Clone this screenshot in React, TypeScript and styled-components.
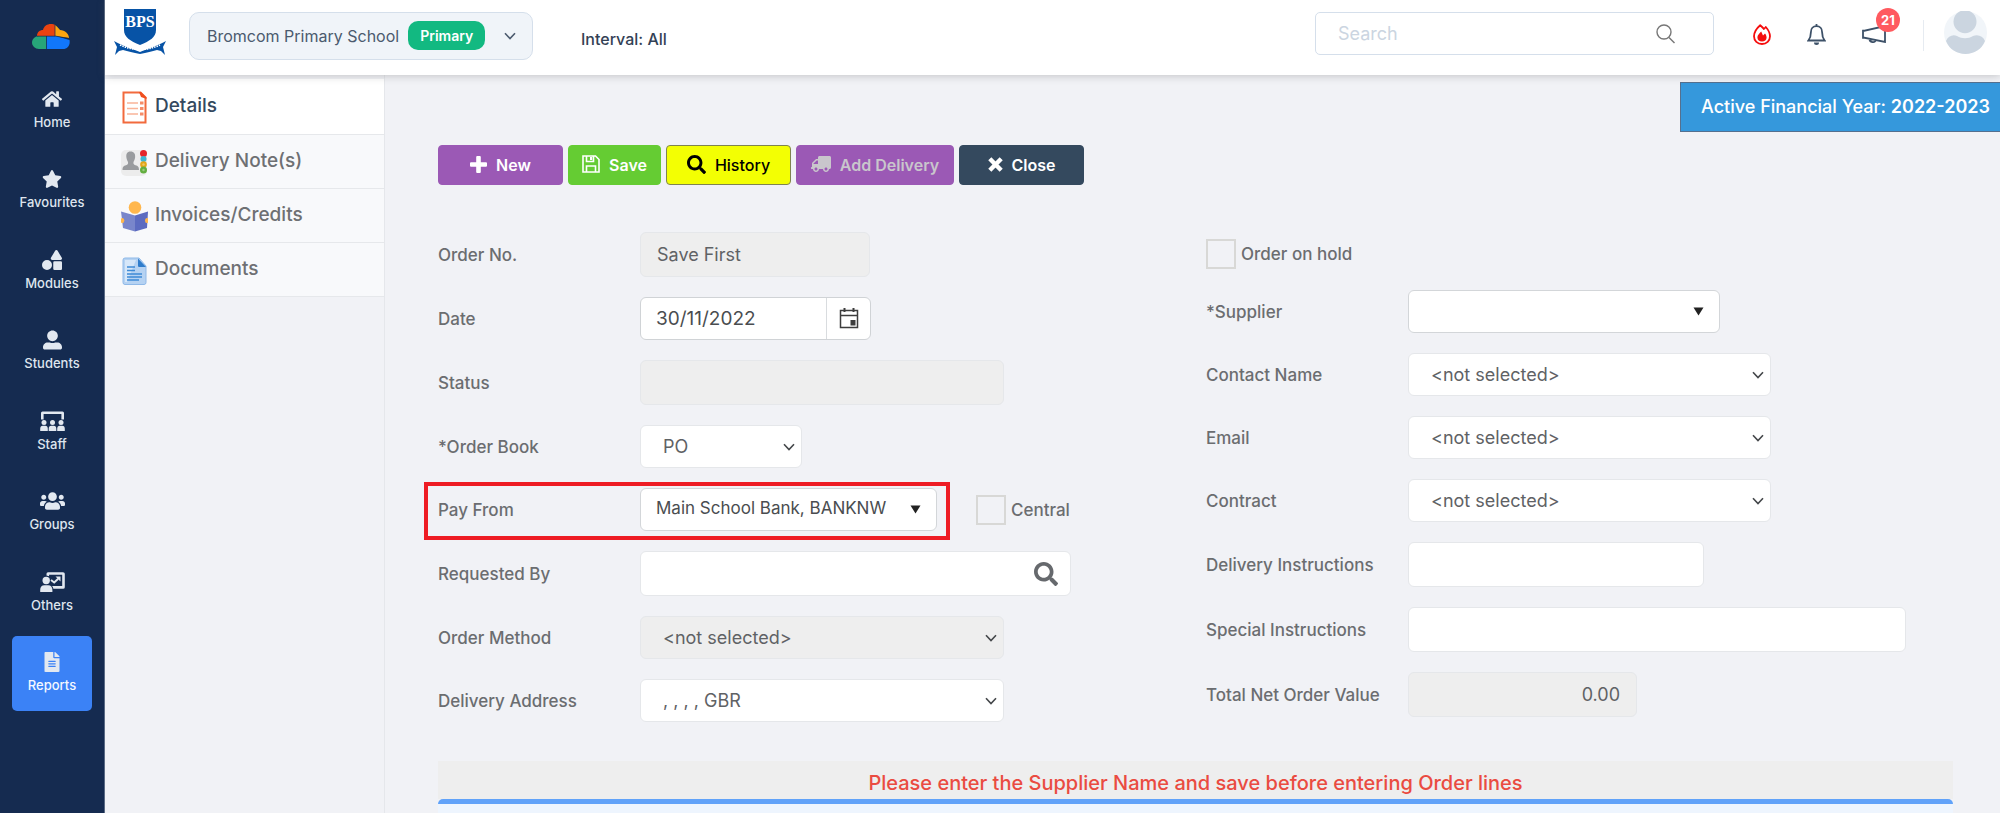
import React from 'react';
import styled, { createGlobalStyle, css } from 'styled-components';
import { FaHome, FaStar, FaShapes, FaUserAlt, FaUsers, FaFileAlt, FaSearch, FaTruck } from 'react-icons/fa';

const GlobalStyle = createGlobalStyle`
  *, *::before, *::after { box-sizing: border-box; }
  body {
    margin: 0;
    background: #f1f2f6;
    font-family: Inter, "Liberation Sans", sans-serif;
    color: #6b6d70;
  }
  button, input, select { font: inherit; color: inherit; margin: 0; }
  a { color: inherit; text-decoration: none; }
  ul { list-style: none; margin: 0; padding: 0; }
`;

/* ---------- shell ---------- */

const Shell = styled.div`
  display: flex;
  min-height: 100vh;
`;

const NavRail = styled.nav`
  flex: none;
  width: 105px;
  background: #152b50;
  border-right: 1px solid #5b6b85;
`;

const Brand = styled.a`
  display: flex;
  justify-content: center;
  padding: 24px 2px 24px 0;
  svg { display: block; }
`;

const NavItem = styled.li`
  margin: 0 12px 5px;
  &:nth-child(even) { margin-bottom: 6px; }
`;

const NavLink = styled.a<{ $active?: boolean }>`
  display: flex;
  flex-direction: column;
  align-items: center;
  gap: 4px;
  height: 75px;
  padding-top: 16px;
  border-radius: 5px;
  font-size: 13px;
  font-weight: 500;
  line-height: 18px;
  color: ${p => (p.$active ? '#f4f8ff' : '#dfe5ee')};
  background: ${p => (p.$active ? '#3b82f6' : 'transparent')};
  svg { display: block; height: 20px; color: #e2e8f0; }
`;

const Main = styled.div`
  flex: 1;
  min-width: 0;
  display: flex;
  flex-direction: column;
`;

/* ---------- header ---------- */

const Header = styled.header`
  display: flex;
  align-items: center;
  height: 75px;
  padding: 0 13px 0 8px;
  background: #fff;
  box-shadow: 0 1px 8px rgba(90, 90, 90, 0.3);
  z-index: 1;
`;

const Crest = styled.svg`
  display: block;
  flex: none;
  margin: 0 22px 11px 0;
`;

const SchoolPicker = styled.button`
  display: flex;
  align-items: center;
  width: 344px;
  height: 48px;
  margin-bottom: 4px;
  padding: 0 16px 0 17px;
  border: 1px solid #d5dfeb;
  border-radius: 10px;
  background: #f0f4f9;
  font-size: 16px;
  color: #4b5a6e;
  svg { margin-left: auto; }
`;

const Pill = styled.span`
  margin-left: 9px;
  padding: 0 12px;
  border-radius: 10px;
  background: #12b981;
  color: #fff;
  font-size: 14px;
  font-weight: 600;
  line-height: 29px;
`;

const Interval = styled.span`
  margin-left: 48px;
  padding-top: 2px;
  font-size: 16px;
  font-weight: 500;
  color: #334155;
`;

const SearchBox = styled.form`
  display: flex;
  align-items: center;
  width: 399px;
  height: 43px;
  margin: 0 39px 8px auto;
  padding: 0 38px 0 22px;
  border: 1px solid #d5dfeb;
  border-radius: 5px;
  background: #fff;
`;

const SearchInput = styled.input`
  flex: 1;
  min-width: 0;
  border: 0;
  padding: 0;
  outline: 0;
  font-size: 18px;
  background: transparent;
  &::placeholder { color: #cbd5e1; opacity: 1; }
`;

const PlainButton = styled.button`
  display: flex;
  padding: 0;
  border: 0;
  background: transparent;
  cursor: pointer;
`;

const HeaderActions = styled.div`
  display: flex;
  align-items: center;
  gap: 36px;
  margin-bottom: 6px;
  color: #3d5168;
`;

const BadgeHolder = styled.span`
  position: relative;
  display: flex;
`;

const Badge = styled.span`
  position: absolute;
  left: 14px;
  top: -18px;
  width: 24px;
  border-radius: 12px;
  background: #ff5a5f;
  color: #fff;
  font-size: 13px;
  font-weight: 700;
  line-height: 24px;
  text-align: center;
`;

const Separator = styled.span`
  width: 1px;
  height: 31px;
  margin: 0 20px 4px 37px;
  background: #e6ebf1;
`;

const ProfileButton = styled(PlainButton)`
  margin-bottom: 10px;
`;

/* ---------- body ---------- */

const Body = styled.div`
  flex: 1;
  display: flex;
`;

const SidePanel = styled.aside`
  flex: none;
  width: 280px;
  padding-top: 4px;
  border-right: 1px solid #e5e7eb;
`;

const SideLink = styled.a<{ $active?: boolean }>`
  display: flex;
  align-items: center;
  gap: 7px;
  height: ${p => (p.$active ? 56 : 54)}px;
  padding: 0 0 2px 16px;
  border-bottom: 1px solid #e6e8eb;
  background: ${p => (p.$active ? '#fff' : '#f8f9fb')};
  color: ${p => (p.$active ? '#34495e' : '#6e7073')};
  font-size: 19px;
  font-weight: 500;
  line-height: 24px;
  svg { flex: none; margin-top: 4px; }
`;

const Content = styled.main`
  flex: 1;
  min-width: 0;
  display: flex;
  flex-direction: column;
  padding: 7px 0 0 53px;
`;

const FinancialYear = styled.div`
  align-self: flex-end;
  padding: 0 10px 0 20px;
  border: 1px solid #55708f;
  border-right: 0;
  background: #3598dc;
  color: #fff;
  font-size: 18px;
  font-weight: 500;
  line-height: 48px;
  strong { font-weight: 600; }
`;

const Toolbar = styled.div`
  display: flex;
  gap: 5px;
  margin: 13px 0 47px;
`;

const tones = {
  purple: css`background: #9b59b5; border-color: #9b59b5; color: #fff;`,
  green: css`background: #65cc33; border-color: #65cc33; color: #fff;`,
  yellow: css`background: #f3ff03; border-color: #7f8450; color: #000; font-weight: 500;`,
  navy: css`background: #34495e; border-color: #34495e; color: #fff;`,
};

const ToolButton = styled.button<{ $tone: keyof typeof tones; $wide?: number }>`
  display: flex;
  align-items: center;
  justify-content: center;
  gap: 9px;
  width: ${p => p.$wide ?? 125}px;
  height: 40px;
  padding: 0;
  border: 1px solid;
  border-radius: 4px;
  font-size: 16px;
  font-weight: 600;
  ${p => tones[p.$tone]}
  &:disabled { color: #c9c6cc; }
  svg { margin-bottom: 2px; }
`;

/* ---------- form ---------- */

const FormGrid = styled.form`
  display: grid;
  grid-template-columns: minmax(0, 768fr) minmax(0, 747fr);
  margin-right: 47px;
`;

const Column = styled.div`
  display: flex;
  flex-direction: column;
  gap: 20px;
`;

const Row = styled.div`
  display: flex;
  align-items: center;
`;

const Label = styled.label`
  flex: none;
  width: 202px;
  font-size: 17px;
  font-weight: 500;
  line-height: 22px;
`;

const fieldLook = css`
  border: 1px solid #e5e7ea;
  border-radius: 6px;
  background: #fff;
  font-size: 18px;
  color: #5f6265;
  outline: 0;
  &:disabled, &:read-only:not(select) { background: #eee; opacity: 1; }
`;

const TextField = styled.input<{ $width: number; $numeric?: boolean }>`
  ${fieldLook}
  width: ${p => p.$width}px;
  height: 45px;
  padding: 0 16px;
  text-align: ${p => (p.$numeric ? 'right' : 'left')};
`;

const PickerFrame = styled.div<{ $width: number; $outlined?: boolean }>`
  ${fieldLook}
  display: flex;
  align-items: stretch;
  width: ${p => p.$width}px;
  height: ${p => (p.$outlined ? 43 : 45)}px;
  border-color: ${p => (p.$outlined ? '#d0d3d6' : '#e5e7ea')};
  &:read-only:not(select) { background: #fff; }
`;

const PickerInput = styled.input`
  flex: 1;
  min-width: 0;
  padding: 0 15px;
  border: 0;
  outline: 0;
  background: transparent;
  font-size: 19px;
  color: #4a4d50;
`;

const CalendarButton = styled(PlainButton)`
  width: 44px;
  align-items: center;
  justify-content: center;
  border-left: 1px solid #d9dcdf;
  color: #3d3d3d;
`;

const LookupButton = styled(PlainButton)`
  width: 48px;
  align-items: center;
  justify-content: center;
  color: #66696d;
`;

const SelectFrame = styled.div<{ $width: number }>`
  display: grid;
  align-items: center;
  width: ${p => p.$width}px;
  > * { grid-area: 1 / 1; }
  > svg { justify-self: end; margin-right: 7px; color: #44474a; pointer-events: none; }
`;

const Select = styled.select`
  ${fieldLook}
  appearance: none;
  width: 100%;
  height: 43px;
  padding: 0 30px 0 22px;
`;

const ComboFrame = styled(SelectFrame)`
  > svg { margin-right: 16px; color: #222; }
`;

const Combo = styled(Select)`
  border-color: #d3d6d9;
  padding: 0 36px 4px 15px;
  font-size: 17px;
  color: #4a4d50;
`;

const Highlighted = styled.div`
  position: relative;
  display: flex;
  align-items: center;
  &::after {
    content: '';
    position: absolute;
    inset: -6px -13px -9px -14px;
    border: 4px solid #ee1c24;
    pointer-events: none;
  }
`;

const CheckRow = styled(Row)<{ $indent?: boolean }>`
  gap: 5px;
  margin-left: ${p => (p.$indent ? 39 : 0)}px;
  height: ${p => (p.$indent ? 'auto' : '38px')};
  padding-top: ${p => (p.$indent ? 0 : 6)}px;
  font-size: 17px;
  font-weight: 500;
  line-height: 22px;
`;

const CheckBox = styled.input`
  appearance: none;
  width: 30px;
  height: 30px;
  border: 2px solid #d8d8d6;
  background: #f1f2f6;
`;

const Notice = styled.p`
  margin: 39px 47px 0 0;
  padding: 7px 0 1px;
  background: #eee;
  color: #ea4b41;
  font-size: 20px;
  font-weight: 500;
  line-height: 30px;
  text-align: center;
`;

const LinesPanel = styled.section`
  flex: 1;
  min-height: 15px;
  margin-right: 47px;
  border-top: 5px solid #60a2f9;
  border-radius: 5px 5px 0 0;
  background: #eef5fe;
`;

/* ---------- drawings ---------- */

const Chevron = ({ size = 12 }: { size?: number }) => (
  <svg width={size} height={size} viewBox="0 0 12 12" fill="none" stroke="currentColor" strokeWidth="1.6" aria-hidden="true">
    <path d="M1 3.2 6 8.6 11 3.2" />
  </svg>
);

const Triangle = () => (
  <svg width="11" height="9" viewBox="0 0 11 9" fill="currentColor" aria-hidden="true">
    <path d="M0.5 0.5h10L5.5 8.5z" />
  </svg>
);

const PlusIcon = () => (
  <svg width="17" height="17" viewBox="0 0 17 17" fill="currentColor" aria-hidden="true">
    <path d="M6.200 1q0-1 1-1h2.600q1 0 1 1v5.200H16q1 0 1 1v2.600q0 1-1 1h-5.200V16q0 1-1 1H7.200q-1 0-1-1v-5.200H1q-1 0-1-1V7.200q0-1 1-1h5.200z" />
  </svg>
);

const CrossIcon = () => (
  <svg width="15" height="15" viewBox="0 0 15 15" fill="none" stroke="currentColor" strokeWidth="4.400" aria-hidden="true">
    <path d="M1.800 1.800 13.200 13.200M13.200 1.800 1.800 13.200" />
  </svg>
);

const CloudLogo = () => (
  <svg width="38" height="25" viewBox="0 0 38 25" aria-hidden="true">
    <path d="M5 12C5 8 8 6 11 6c1-4 4-6 8-6 1.600 0 3 .4 4 1v11z" fill="#ea4310" />
    <path d="M23 1c3 2 4 4 5 5 5 0 9 4 9 8l-14-2z" fill="#fda50f" />
    <path d="M7 12h7.500v13H7c-4 0-7-3-7-6.500S3 12 7 12z" fill="#27a579" />
    <path d="M14.500 12H24l13.500 4c1 5-2 9-6.500 9H14.500z" fill="#1177fb" />
    <path d="M5 12.200h18V1M14.500 12v13M23 12l14 2.500" stroke="#152b50" strokeWidth=".7" fill="none" />
  </svg>
);

const StaffIcon = () => (
  <svg width="25" height="20" viewBox="0 0 25 20" fill="currentColor" aria-hidden="true">
    <path d="M1 8.500V2Q1 .5 2.500 .5h20Q24 .5 24 2v6.500h-2.600V3H3.600v5.500z" />
    <circle cx="4" cy="11.500" r="2.500" /><circle cx="12.500" cy="11.500" r="2.500" /><circle cx="21" cy="11.500" r="2.500" />
    <path d="M.2 20v-2.200q0-3 2.600-3h2.400q2.600 0 2.600 3V20zM8.700 20v-2.200q0-3 2.600-3h2.400q2.600 0 2.600 3V20zM17.200 20v-2.200q0-3 2.600-3h2.400q2.600 0 2.600 3V20z" />
  </svg>
);

const OthersIcon = () => (
  <svg width="25" height="20" viewBox="0 0 25 20" fill="currentColor" aria-hidden="true">
    <circle cx="6.200" cy="8.500" r="3.700" />
    <path d="M.2 20v-2q0-4.800 4.300-4.800h3.600q4.300 0 4.300 4.800v2z" />
    <path d="M6.500 3.500V1.800Q6.500 .3 8 .3h15Q24.800 .3 24.800 1.800v13.400q0 1.500-1.800 1.500h-9.600q-.3-1.600-1.300-2.600h10.100V2.800H9.100v1.400z" />
    <path d="m11 8 3.200 2.500 4-3.800" fill="none" stroke="currentColor" strokeWidth="2" />
    <path d="M15.500 4.500h5v5z" />
  </svg>
);

const BPSCrest = () => (
  <Crest width="54" height="47" viewBox="0 0 54 47" role="img" aria-label="School crest">
    <path d="M11 0h32v21c0 7-6 11-16 15C17 32 11 28 11 21z" fill="#0753a6" />
    <text x="27" y="18" textAnchor="middle" fontFamily="Liberation Serif, serif" fontWeight="700" fontSize="16" fill="#fff">BPS</text>
    <path d="M1 32c5 3 9 4.500 26 11 17-6.500 21-8 26-11l-3 6 2 8-4-4-4-1c-5 1-10 3-17 4-7-1-12-3-17-4l-4 1-4 4 2-8z" fill="#0753a6" />
    <path d="M7 36q20 9 40 0" stroke="#fff" strokeWidth="1.600" strokeDasharray="1.500 1" fill="none" />
  </Crest>
);

const SearchIcon = () => (
  <svg width="19" height="20" viewBox="0 0 19 20" fill="none" stroke="#777" strokeWidth="1.400" aria-hidden="true">
    <circle cx="8" cy="8" r="7" /><path d="m13 13.500 5.500 5.500" />
  </svg>
);

const FlameIcon = () => (
  <svg width="18" height="21" viewBox="0 0 18 21" aria-hidden="true">
    <path d="M7.200 1.200C4 4 1 8 1 12.300 1 16.800 4.500 20 9 20s8-3.200 8-7.700c0-3.300-2-6.800-4.200-9.300L10.900 5C9.800 3.500 8.500 2.300 7.200 1.200z" fill="none" stroke="#f50d0d" strokeWidth="1.800" strokeLinejoin="round" />
    <path d="M8.200 7.500c-2 2-3.800 3.700-3.800 6 0 2.400 2 4 4.600 4s4.600-1.700 4.600-4.100c0-1.500-.8-3-1.600-4l-2 2z" fill="#f50d0d" />
  </svg>
);

const BellIcon = () => (
  <svg width="19" height="21" viewBox="0 0 19 21" fill="none" stroke="currentColor" strokeWidth="1.800" aria-hidden="true">
    <path d="M9.500 2.200c-3.500 0-5.600 2.700-5.600 6 0 4.500-1 6.300-2.500 8.300h16.200c-1.500-2-2.500-3.800-2.500-8.300 0-3.300-2.100-6-5.600-6zM9.500 0v2.500" />
    <path d="M7 18.500h5a2.500 2.500 0 0 1-5 0z" fill="currentColor" stroke="none" />
  </svg>
);

const MegaphoneIcon = () => (
  <svg width="24" height="17" viewBox="0 0 24 17" fill="none" stroke="currentColor" strokeWidth="1.800" aria-hidden="true">
    <path d="M23 0v16L1 11.500V5L23 0M1 3.800v8.900M7.500 13c0 4 6 4 6 1" />
  </svg>
);

const Avatar = () => (
  <svg width="43" height="43" viewBox="0 0 43 43" role="img" aria-label="Your profile">
    <circle cx="21.500" cy="21.500" r="21.500" fill="#f1f5f9" />
    <circle cx="21" cy="10.700" r="11.500" fill="#cbd5e0" />
    <path d="M2 30c2-5 7-7 11-5 5 3 11 3 16 0 5-2 10 0 12 5-3 8-11 13-19.500 13S5 38 2 30z" fill="#cbd5e0" />
  </svg>
);

const CalendarIcon = () => (
  <svg width="20" height="21" viewBox="0 0 20 21" fill="none" stroke="currentColor" strokeWidth="1.500" aria-hidden="true">
    <path d="M1.500 2.500h17v17h-17zM1.500 7.500h17" /><path d="M5.500 0v4M14.500 0v4" strokeWidth="2" />
    <path d="M11.500 12h5v5.500h-5z" fill="currentColor" stroke="none" />
  </svg>
);

const DisketteIcon = () => (
  <svg width="18" height="18" viewBox="0 0 18 18" fill="none" stroke="currentColor" strokeWidth="1.600" aria-hidden="true">
    <path d="M1 1h12.500L17 4.500V17H1zM4.500 17v-6h9v6M4.500 1v5.500h7V1" /><path d="M8 2h2.200v3H8z" fill="currentColor" stroke="none" />
  </svg>
);

const DetailsIcon = () => (
  <svg width="27" height="33" viewBox="0 0 27 33" aria-hidden="true">
    <path d="M2.500 1.500h17l5 5v25h-22z" fill="#fff" stroke="#f26a3d" strokeWidth="2" /><path d="M18 1h2l5.500 5.500V8L20 6z" fill="#f04e1f" />
    <path d="M6 12h11M6 17.500h11M6 23h11" stroke="#f9b499" strokeWidth="1.600" /><path d="M19 12h3.500M19 17.500h3.500M19 23h3.500" stroke="#f58c68" strokeWidth="3" />
  </svg>
);

const ContactIcon = () => (
  <svg width="27" height="28" viewBox="0 0 27 28" aria-hidden="true">
    <rect x="0" y="1" width="26" height="26" rx="5" fill="#ececec" />
    <path d="M9.500 2.500c3.500 0 5 2.500 4.600 6-.3 2.500-1.200 3.500-1.600 4.500-.3 2 .2 2.600 2 3.200 2.500.8 3.500 1.500 3.500 4.800H1.500c0-3.300 1-4 3.500-4.800 1.800-.6 2.300-1.200 2-3.200-.4-1-1.300-2-1.600-4.500-.4-3.500.6-6 4.100-6z" fill="#999b9e" />
    <circle cx="22.500" cy="4.500" r="3.500" fill="#e6262b" /><circle cx="22.500" cy="10" r="3" fill="#3fb6d3" />
    <circle cx="22.500" cy="15.500" r="3.300" fill="#e3a617" /><circle cx="22.500" cy="21" r="3.500" fill="#62ae3f" />
    <g fill="#fff" fillOpacity=".35"><circle cx="22.500" cy="21" r="1.200" /><circle cx="22.500" cy="15.500" r="1.200" /></g>
  </svg>
);

const ReaderIcon = () => (
  <svg width="27" height="31" viewBox="0 0 27 31" aria-hidden="true">
    <circle cx="14" cy="6.500" r="6.300" fill="#ffb74d" />
    <path d="M0 10.500 14 14.500v16L2 27z" fill="#7986cb" /><path d="M27 10.500 14 14.500v16L26 27z" fill="#5c6bc0" />
    <ellipse cx="1.500" cy="19.500" rx="1.800" ry="2.600" fill="#ffb74d" /><ellipse cx="25.800" cy="19.500" rx="1.800" ry="2.600" fill="#ffb74d" />
  </svg>
);

const DocumentIcon = () => (
  <svg width="27" height="28" viewBox="0 0 27 28" aria-hidden="true">
    <path d="M4 1h14l7 8v16.500q0 2-2 2H4q-2 0-2-2V3q0-2 2-2z" fill="#b5d2f2" stroke="#8fb9e8" />
    <path d="M4 3h11l-9 22H4z" fill="#d6e7f9" /><path d="M17 1.500 25 10h-7q-1 0-1-1.500z" fill="#2f7ccb" />
    <path d="M6 10h8M6 13.500h8M6 17h15M6 20h15M6 23h12" stroke="#3e8bd6" strokeWidth="1.500" />
  </svg>
);

/* ---------- page ---------- */

const navItems = [
  { label: 'Home', icon: <FaHome size={20} /> },
  { label: 'Favourites', icon: <FaStar size={20} /> },
  { label: 'Modules', icon: <FaShapes size={20} /> },
  { label: 'Students', icon: <FaUserAlt size={19} /> },
  { label: 'Staff', icon: <StaffIcon /> },
  { label: 'Groups', icon: <FaUsers size={25} /> },
  { label: 'Others', icon: <OthersIcon /> },
  { label: 'Reports', icon: <FaFileAlt size={20} />, active: true },
];

const sideItems = [
  { label: 'Details', icon: <DetailsIcon />, active: true },
  { label: 'Delivery Note(s)', icon: <ContactIcon /> },
  { label: 'Invoices/Credits', icon: <ReaderIcon /> },
  { label: 'Documents', icon: <DocumentIcon /> },
];

function SelectRow({ id, label, value, width, disabled }: { id: string; label: string; value: string; width: number; disabled?: boolean }) {
  return (
    <Row>
      <Label htmlFor={id}>{label}</Label>
      <SelectFrame $width={width}>
        <Select id={id} disabled={disabled}><option>{value}</option></Select>
        <Chevron />
      </SelectFrame>
    </Row>
  );
}

function TextRow({ id, label, width, ...rest }: { id: string; label: string; width: number } & React.InputHTMLAttributes<HTMLInputElement> & { $numeric?: boolean }) {
  return (
    <Row>
      <Label htmlFor={id}>{label}</Label>
      <TextField id={id} $width={width} {...rest} />
    </Row>
  );
}

export default function App() {
  return (
    <>
      <GlobalStyle />
      <Shell>
        <NavRail aria-label="Main">
          <Brand href="#" aria-label="Start page"><CloudLogo /></Brand>
          <ul>
            {navItems.map(item => (
              <NavItem key={item.label}>
                <NavLink href="#" $active={item.active}>{item.icon}{item.label}</NavLink>
              </NavItem>
            ))}
          </ul>
        </NavRail>

        <Main>
          <Header>
            <BPSCrest />
            <SchoolPicker type="button">
              Bromcom Primary School<Pill>Primary</Pill><Chevron size={12} />
            </SchoolPicker>
            <Interval>Interval: All</Interval>
            <SearchBox role="search">
              <SearchInput type="text" placeholder="Search" aria-label="Search" />
              <PlainButton type="button" aria-label="Run search"><SearchIcon /></PlainButton>
            </SearchBox>
            <HeaderActions>
              <PlainButton type="button" aria-label="Hot topics"><FlameIcon /></PlainButton>
              <PlainButton type="button" aria-label="Notifications"><BellIcon /></PlainButton>
              <PlainButton type="button" aria-label="Announcements">
                <BadgeHolder><MegaphoneIcon /><Badge>21</Badge></BadgeHolder>
              </PlainButton>
            </HeaderActions>
            <Separator />
            <ProfileButton type="button"><Avatar /></ProfileButton>
          </Header>

          <Body>
            <SidePanel>
              {sideItems.map(item => (
                <SideLink key={item.label} href="#" $active={item.active}>{item.icon}{item.label}</SideLink>
              ))}
            </SidePanel>

            <Content>
              <FinancialYear>Active Financial Year: <strong>2022-2023</strong></FinancialYear>
              <Toolbar>
                <ToolButton type="button" $tone="purple"><PlusIcon />New</ToolButton>
                <ToolButton type="button" $tone="green" $wide={93}><DisketteIcon />Save</ToolButton>
                <ToolButton type="button" $tone="yellow"><FaSearch size={19} />History</ToolButton>
                <ToolButton type="button" $tone="purple" $wide={158} disabled><FaTruck size={20} transform="scale(-1 1)" />Add Delivery</ToolButton>
                <ToolButton type="button" $tone="navy"><CrossIcon />Close</ToolButton>
              </Toolbar>

              <FormGrid>
                <Column>
                  <TextRow id="order-no" label="Order No." width={230} defaultValue="Save First" readOnly />
                  <Row>
                    <Label htmlFor="date">Date</Label>
                    <PickerFrame $width={231} $outlined>
                      <PickerInput id="date" type="text" defaultValue="30/11/2022" />
                      <CalendarButton type="button" aria-label="Pick a date"><CalendarIcon /></CalendarButton>
                    </PickerFrame>
                  </Row>
                  <TextRow id="status" label="Status" width={364} readOnly />
                  <SelectRow id="order-book" label="*Order Book" value="PO" width={162} />
                  <Row>
                    <Highlighted>
                      <Label htmlFor="pay-from">Pay From</Label>
                      <ComboFrame $width={297}>
                        <Combo id="pay-from"><option>Main School Bank, BANKNW</option></Combo>
                        <Triangle />
                      </ComboFrame>
                    </Highlighted>
                    <CheckRow as="label" $indent><CheckBox type="checkbox" />Central</CheckRow>
                  </Row>
                  <Row>
                    <Label htmlFor="requested-by">Requested By</Label>
                    <PickerFrame $width={431}>
                      <PickerInput id="requested-by" type="text" />
                      <LookupButton type="button" aria-label="Look up a person"><FaSearch size={24} /></LookupButton>
                    </PickerFrame>
                  </Row>
                  <SelectRow id="order-method" label="Order Method" value="<not selected>" width={364} disabled />
                  <SelectRow id="delivery-address" label="Delivery Address" value=", , , , GBR" width={364} />
                </Column>

                <Column>
                  <CheckRow as="label"><CheckBox type="checkbox" />Order on hold</CheckRow>
                  <Row>
                    <Label htmlFor="supplier">*Supplier</Label>
                    <ComboFrame $width={312}>
                      <Combo id="supplier"><option aria-label="No supplier" /></Combo>
                      <Triangle />
                    </ComboFrame>
                  </Row>
                  <SelectRow id="contact" label="Contact Name" value="<not selected>" width={363} />
                  <SelectRow id="email" label="Email" value="<not selected>" width={363} />
                  <SelectRow id="contract" label="Contract" value="<not selected>" width={363} />
                  <TextRow id="delivery-instructions" label="Delivery Instructions" width={296} />
                  <TextRow id="special-instructions" label="Special Instructions" width={498} />
                  <TextRow id="total" label="Total Net Order Value" width={229} defaultValue="0.00" readOnly $numeric />
                </Column>
              </FormGrid>

              <Notice>Please enter the Supplier Name and save before entering Order lines</Notice>
              <LinesPanel aria-label="Order lines" />
            </Content>
          </Body>
        </Main>
      </Shell>
    </>
  );
}
